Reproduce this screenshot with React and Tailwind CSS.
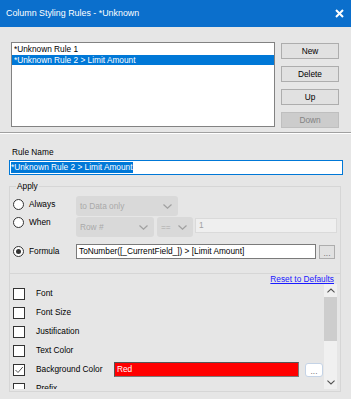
import React from "react";

const Chevron = ({ up = false, color = "#a0a0a0", w = 9, h = 5 }) => (
  <svg width={w} height={h} viewBox="0 0 9 5" className="block">
    <path d={up ? "M0.5 4.5 L4.5 0.8 L8.5 4.5" : "M0.5 0.5 L4.5 4.2 L8.5 0.5"} fill="none" stroke={color} strokeWidth="1.2" />
  </svg>
);

const Radio = ({ checked, label }) => (
  <div className="flex items-center h-[11px]">
    <div className="w-[11px] h-[11px] rounded-full border border-[#333333] bg-white flex items-center justify-center">
      {checked && <div className="w-[5px] h-[5px] rounded-full bg-[#333333]" />}
    </div>
    <span className="ml-[5px] leading-[11px]">{label}</span>
  </div>
);

const Combo = ({ w, text, chevronRight = 6 }) => (
  <div
    className="h-[20px] rounded-[3px] bg-[#d9d9d9] flex items-center justify-between pl-[4px] text-[#a9a9a9] shrink-0"
    style={{ width: w, paddingRight: chevronRight }}
  >
    <span>{text}</span>
    <Chevron />
  </div>
);

const Check = ({ checked }) => (
  <div className="w-[12px] h-[12px] border border-[#333333] bg-white flex items-center justify-center shrink-0">
    {checked && (
      <svg width="10" height="10" viewBox="0 0 10 10">
        <path d="M1.5 5 L4 7.5 L8.8 2" fill="none" stroke="#555555" strokeWidth="1" />
      </svg>
    )}
  </div>
);

const Btn = ({ children, disabled }) => (
  <div
    className={
      "h-[16px] w-[58px] flex items-center justify-center border " +
      (disabled ? "bg-[#cccccc] border-[#bfbfbf] text-[#838383]" : "bg-[#e1e1e1] border-[#adadad] text-black")
    }
  >
    {children}
  </div>
);

export default function App() {
  const rows = [
    { label: "Font" },
    { label: "Font Size" },
    { label: "Justification" },
    { label: "Text Color" },
    { label: "Background Color", checked: true, color: true },
    { label: "Prefix" },
  ];
  return (
    <div
      className="w-[351px] h-[399px] bg-[#e6e6e6] overflow-hidden text-[8.3px] text-black"
      style={{ fontFamily: '"Liberation Sans", Arial, sans-serif' }}
    >
      {/* Title bar */}
      <div className="h-[27px] bg-[#0b6fcc] flex items-center justify-between pl-[6px] pr-[7px] text-white text-[8.9px]">
        <span>Column Styling Rules - *Unknown</span>
        <svg width="9" height="9" viewBox="0 0 9 9">
          <path d="M1 1 L8 8 M8 1 L1 8" stroke="white" strokeWidth="2" />
        </svg>
      </div>

      {/* Top section */}
      <div className="flex pt-[15px] pl-[11px] h-[101px]">
        <div className="w-[264px] h-[85px] bg-white border border-[#828282] pt-[1px]">
          <div className="h-[11px] leading-[11px] pl-[2px]">*Unknown Rule 1</div>
          <div className="h-[10px] leading-[10px] pl-[2px] bg-[#0078d7] text-white">*Unknown Rule 2 &gt; Limit Amount</div>
        </div>
        <div className="ml-[6px] pt-[1px] flex flex-col gap-[7px]">
          <Btn>New</Btn>
          <Btn>Delete</Btn>
          <Btn>Up</Btn>
          <Btn disabled>Down</Btn>
        </div>
      </div>

      {/* Separator */}
      <div className="mt-[4px] h-[2px] border-t border-[#a0a0a0] border-b border-b-white" />

      {/* Rule name */}
      <div className="mt-[12px] h-[12px] leading-[12px] pl-[12px]">Rule Name</div>
      <div className="mt-[2px] ml-[9px] w-[334px] h-[15px] bg-white border border-[#0078d7] flex items-center pl-[1px]">
        <span className="bg-[#0078d7] text-white leading-[11px]">*Unknown Rule 2 &gt; Limit Amount</span>
      </div>

      {/* Apply group */}
      <div className="relative mt-[11px] ml-[9px] w-[332px] h-[87px] border-t border-l border-r border-[#d6d6d6]">
        <div className="absolute left-[6px] -top-[6px] px-[1px] bg-[#e6e6e6] leading-[11px]">Apply</div>
        <div className="pt-[9px] pl-[3px]">
          {/* Always */}
          <div className="flex h-[20px]">
            <div className="w-[63px] pt-[3px]">
              <Radio label="Always" />
            </div>
            <Combo w={102} text="to Data only" chevronRight={6} />
          </div>
          {/* When */}
          <div className="flex h-[20px] mt-[1px]">
            <div className="w-[63px]">
              <Radio label="When" />
            </div>
            <Combo w={78} text="Row #" chevronRight={6} />
            <div className="ml-[3px]">
              <Combo w={36} text="==" chevronRight={6} />
            </div>
            <div className="ml-[2px] mt-[1px] w-[142px] h-[15px] bg-[#efefef] border border-[#dadada] flex items-center pl-[3px] text-[#a0a0a0]">
              1
            </div>
          </div>
          {/* Formula */}
          <div className="flex h-[15px] mt-[7px]">
            <div className="w-[63px] pt-[2px]">
              <Radio checked label="Formula" />
            </div>
            <div className="w-[240px] h-[15px] bg-white border border-[#7a7a7a] flex items-center pl-[2px] whitespace-nowrap">
              ToNumber([_CurrentField_]) &gt; [Limit Amount]
            </div>
            <div className="ml-[3px] mt-[1px] w-[16px] h-[14px] bg-[#e1e1e1] border border-[#adadad] flex items-end justify-center pb-[2px] text-[#777777] leading-[6px]">
              ...
            </div>
          </div>
        </div>
      </div>

      {/* Lower panel */}
      <div className="ml-[9px] w-[332px] h-[119px] border border-[#d6d6d6]">
        <div className="h-[10px] flex justify-end pr-[6px]">
          <span className="text-[#1a1aff] underline leading-[10px]">Reset to Defaults</span>
        </div>
        <div className="flex h-[105px]">
          <div className="w-[314px] h-[105px] overflow-hidden">
            {rows.map((r) => (
              <div key={r.label} className="h-[19px] flex items-center pl-[3px]">
                <Check checked={r.checked} />
                <span className="ml-[11px] w-[78px] whitespace-nowrap">{r.label}</span>
                {r.color && (
                  <>
                    <div className="w-[185px] h-[15px] bg-[#ff0000] border border-[#7a7a7a] border-t-[#555555] border-l-[#555555] flex items-center pl-[2px] text-white">
                      Red
                    </div>
                    <div className="ml-[6px] w-[18px] h-[14px] bg-white rounded-[3px] border border-[#c4d3e6] flex items-end justify-center pb-[2px] text-[#777777] leading-[6px]">
                      ...
                    </div>
                  </>
                )}
              </div>
            ))}
          </div>
          <div className="w-[13px] h-[105px] bg-[#f0f0f0] flex flex-col items-center">
            <div className="h-[13px] flex items-center justify-center">
              <Chevron up color="#505050" w={8} h={5} />
            </div>
            <div className="w-[13px] h-[44px] bg-[#cdcdcd]" />
            <div className="flex-1" />
            <div className="h-[13px] flex items-center justify-center">
              <Chevron color="#505050" w={8} h={5} />
            </div>
          </div>
        </div>
      </div>
    </div>
  );
}
